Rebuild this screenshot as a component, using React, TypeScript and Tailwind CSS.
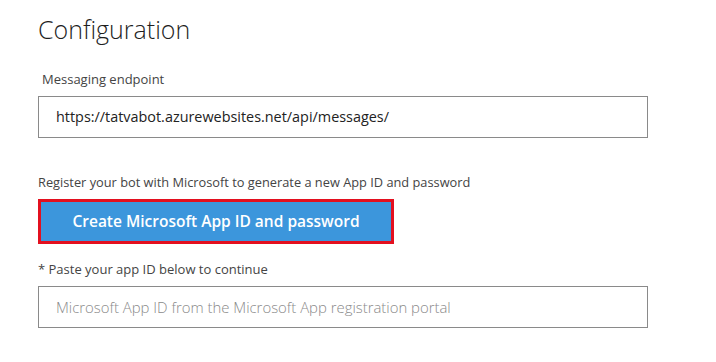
export default function App() {
  return (
    <div className="w-[716px] h-[362px] bg-white font-['Open_Sans',sans-serif] text-[#222] overflow-hidden">
      <div className="pl-[38px] pt-[13px] w-[648px]">
        <h1 className="text-[25px] font-light leading-[32px] text-[#1e1e1e]">Configuration</h1>

        <p className="mt-[25px] pl-[4px] text-[13px] leading-[18px] text-[#444]">Messaging endpoint</p>
        <div className="mt-[8px] h-[42px] border border-[#8a8a8a] flex items-center pl-[17px] text-[14.4px] text-[#222]">
          https://tatvabot.azurewebsites.net/api/messages/
        </div>

        <p className="mt-[35px] text-[12.8px] leading-[18px] text-[#444]">
          Register your bot with Microsoft to generate a new App ID and password
        </p>
        <button className="mt-[8px] w-[356px] h-[45px] border-[3px] border-[#e3101f] bg-[#3c96dc] text-white text-[15.5px] font-semibold flex items-center justify-center">
          Create Microsoft App ID and password
        </button>

        <p className="mt-[16px] text-[13px] leading-[18px] text-[#444]">* Paste your app ID below to continue</p>
        <div className="mt-[8px] h-[42px] border border-[#8a8a8a] flex items-center pl-[17px] text-[14.9px] font-light text-[#8a8a8a]">
          Microsoft App ID from the Microsoft App registration portal
        </div>
      </div>
    </div>
  );
}
